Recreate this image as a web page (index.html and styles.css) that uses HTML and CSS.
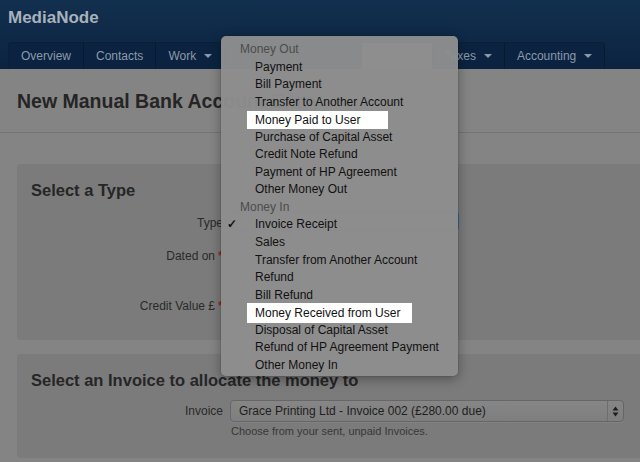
FILE: index.html
```html
<!DOCTYPE html>
<html lang="en">
<head>
<meta charset="utf-8">
<title>New Manual Bank Account Entry</title>
<link rel="stylesheet" href="styles.css">
</head>
<body>
<div class="page">
  <header class="topbar">
    <div class="brand">MediaNode</div>
    <nav class="tabs">
      <a class="tab">Overview</a>
      <a class="tab">Contacts</a>
      <a class="tab">Work <span class="caret"></span></a>
      <a class="tab tab-hidden tab-a" aria-hidden="true"></a>
      <a class="tab tab-hidden tab-b" aria-hidden="true"></a>
      <a class="tab active">Banking</a>
      <a class="tab">Taxes <span class="caret"></span></a>
      <a class="tab">Accounting <span class="caret"></span></a>
    </nav>
  </header>

  <div class="titlebar">
    <h1 class="title">New Manual Bank Account Entry</h1>
  </div>

  <main class="content">
    <section class="panel panel-type">
      <h2 class="panel-title">Select a Type</h2>
      <div class="row row-type">
        <label class="label">Type</label>
        <div class="control"><div class="select select-focus"></div></div>
      </div>
      <div class="row row-date">
        <label class="label">Dated on <span class="req">*</span></label>
        <div class="control">
          <div class="input input-short"></div>
        </div>
      </div>
      <div class="row row-credit">
        <label class="label">Credit Value £ <span class="req">*</span></label>
        <div class="control"><div class="input input-short"></div></div>
      </div>
    </section>

    <section class="panel panel-invoice">
      <h2 class="panel-title">Select an Invoice to allocate the money to</h2>
      <div class="row row-invoice">
        <label class="label">Invoice</label>
        <div class="control">
          <div class="select select-wide">
            <span class="select-text">Grace Printing Ltd - Invoice 002 (£280.00 due)</span>
            <span class="select-arrows">
              <svg width="7" height="11" viewBox="0 0 7 11"><path d="M3.5 0.5 L6.5 4.5 L0.5 4.5 Z M3.5 10.5 L6.5 6.5 L0.5 6.5 Z" fill="#1e1e1e"/></svg>
            </span>
          </div>
          <div class="help help-invoice">Choose from your sent, unpaid Invoices.</div>
        </div>
      </div>
    </section>
  </main>

  <div class="menu">
    <div class="menu-group">Money Out</div>
    <div class="menu-item">Payment</div>
    <div class="menu-item">Bill Payment</div>
    <div class="menu-item">Transfer to Another Account</div>
    <div class="menu-item"><span class="hl hl-paid">Money Paid to User</span></div>
    <div class="menu-item">Purchase of Capital Asset</div>
    <div class="menu-item">Credit Note Refund</div>
    <div class="menu-item">Payment of HP Agreement</div>
    <div class="menu-item">Other Money Out</div>
    <div class="menu-group">Money In</div>
    <div class="menu-item checked"><span class="check">✓</span>Invoice Receipt</div>
    <div class="menu-item">Sales</div>
    <div class="menu-item">Transfer from Another Account</div>
    <div class="menu-item">Refund</div>
    <div class="menu-item">Bill Refund</div>
    <div class="menu-item"><span class="hl hl-recv">Money Received from User</span></div>
    <div class="menu-item">Disposal of Capital Asset</div>
    <div class="menu-item">Refund of HP Agreement Payment</div>
    <div class="menu-item">Other Money In</div>
  </div>
</div>
</body>
</html>
```

FILE: styles.css
```css
html, body {
  margin: 0;
  padding: 0;
}
body {
  width: 640px;
  height: 462px;
  overflow: hidden;
  background: #848484;
  font-family: "Liberation Sans", Arial, sans-serif;
  color: #222;
}
.page {
  position: relative;
  width: 640px;
  height: 462px;
  overflow: hidden;
}

/* Header */
.topbar {
  height: 69px;
  background: linear-gradient(#12304f, #0b233f);
  display: flex;
  flex-direction: column;
}
.brand {
  font-weight: bold;
  font-size: 17px;
  line-height: 20px;
  color: #a9b1bb;
  padding: 8px 0 0 8px;
  height: 42px;
  box-sizing: border-box;
}
.tabs {
  display: flex;
  margin-left: 8px;
  height: 27px;
}
.tab {
  display: flex;
  align-items: center;
  padding: 0 12px;
  font-size: 12px;
  color: #8b99aa;
  background: #0b2340;
  border-right: 1px solid #071a2f;
  border-top: 1px solid #09203a;
  box-sizing: border-box;
  white-space: nowrap;
}
.tab:first-child {
  border-left: 1px solid #09203a;
  border-top-left-radius: 4px;
}
.tab:last-child {
  border-top-right-radius: 4px;
}
.tab-hidden { padding: 0; }
.tab-a { width: 64px; }
.tab-b { width: 73px; }
.tab.active {
  background: #9a9a9a;
  color: #b5b5b5;
  padding: 0 13px;
}
.caret {
  display: inline-block;
  width: 0;
  height: 0;
  margin-left: 8px;
  border-left: 4px solid transparent;
  border-right: 4px solid transparent;
  border-top: 4px solid #8b99aa;
}

/* Title */
.titlebar {
  height: 64px;
  border-bottom: 1px solid #747474;
  display: flex;
  align-items: center;
  padding-left: 17px;
  box-sizing: border-box;
}
.title {
  margin: 0;
  font-size: 19.5px;
  line-height: 24px;
  font-weight: bold;
  color: #252525;
  white-space: nowrap;
  padding-top: 1px;
}

/* Content */
.content {
  padding: 31px 0 0 17px;
}
.panel {
  background: #7b7b7b;
  margin-right: -20px;
  border-radius: 4px;
  padding: 15px 14px 0 14px;
}
.panel-type {
  height: 176px;
  box-sizing: border-box;
  margin-bottom: 14px;
}
.panel-invoice {
  height: 104px;
  box-sizing: border-box;
}
.panel-title {
  margin: 0;
  font-size: 16.5px;
  line-height: 20px;
  font-weight: bold;
  color: #262626;
  white-space: nowrap;
  padding-top: 1px;
}
.row {
  display: grid;
  grid-template-columns: 192px 1fr;
  column-gap: 7px;
  align-items: start;
}
.label {
  text-align: right;
  font-size: 12px;
  line-height: 20px;
  padding-top: 2px;
  color: #2a2a2a;
  white-space: nowrap;
}
.req {
  color: #9a1d1d;
  font-weight: bold;
}
.row-type { margin-top: 11px; }
.row-date { margin-top: 11px; }
.row-credit { margin-top: 28px; }
.row-invoice { margin-top: 9px; }
.row-invoice .label { line-height: 22px; padding-top: 1px; }

.select {
  height: 20px;
  border: 1px solid #6c6c6c;
  border-radius: 4px;
  background: #838383;
  box-sizing: border-box;
}
.select-focus {
  width: 229px;
  border: 2px solid #3d6893;
}
.input {
  height: 20px;
  border: 1px solid #737373;
  border-radius: 3px;
  background: #838383;
  box-sizing: border-box;
}
.input-short { width: 100px; }
.help {
  font-size: 11px;
  line-height: 14px;
  color: #383838;
  margin-top: 3px;
}
.select-wide {
  width: 394px;
  height: 22px;
  margin-top: 1px;
  display: flex;
  align-items: center;
  background: linear-gradient(#868686, #7e7e7e);
  border-color: #666;
  box-shadow: 0 1px 0 rgba(255,255,255,0.06);
}
.select-text {
  flex: 1;
  font-size: 12px;
  color: #1e1e1e;
  padding-left: 8px;
  white-space: nowrap;
}
.select-arrows {
  width: 15px;
  height: 20px;
  border-left: 1px solid #6e6e6e;
  display: flex;
  align-items: center;
  justify-content: center;
}
.help-invoice { margin-top: 2px; padding-left: 1px; }

/* Native popup menu */
.menu {
  position: absolute;
  left: 221px;
  top: 36px;
  width: 237px;
  height: 340px;
  box-sizing: border-box;
  padding-top: 5px;
  background: rgba(141, 141, 141, 0.97);
  border-radius: 5px;
  box-shadow: 0 3px 12px rgba(0, 0, 0, 0.35), 0 0 0 1px rgba(0,0,0,0.06);
  font-size: 12px;
}
.menu-group,
.menu-item {
  height: 17.55px;
  line-height: 17.55px;
  white-space: nowrap;
}
.menu-group {
  padding-left: 19px;
  color: #4c4c4c;
}
.menu-item {
  position: relative;
  padding-left: 34px;
  color: #111;
}
.check {
  position: absolute;
  left: 6px;
  top: 0;
  font-size: 12px;
  font-weight: bold;
}
.hl {
  display: inline-block;
  background: #fff;
  margin-left: -8px;
  padding: 0 8px;
  line-height: 18px;
  position: relative;
  top: 0;
}
.hl-paid { width: 125px; }
.hl-recv { width: 149px; line-height: 20px; top: -1px; }
```
